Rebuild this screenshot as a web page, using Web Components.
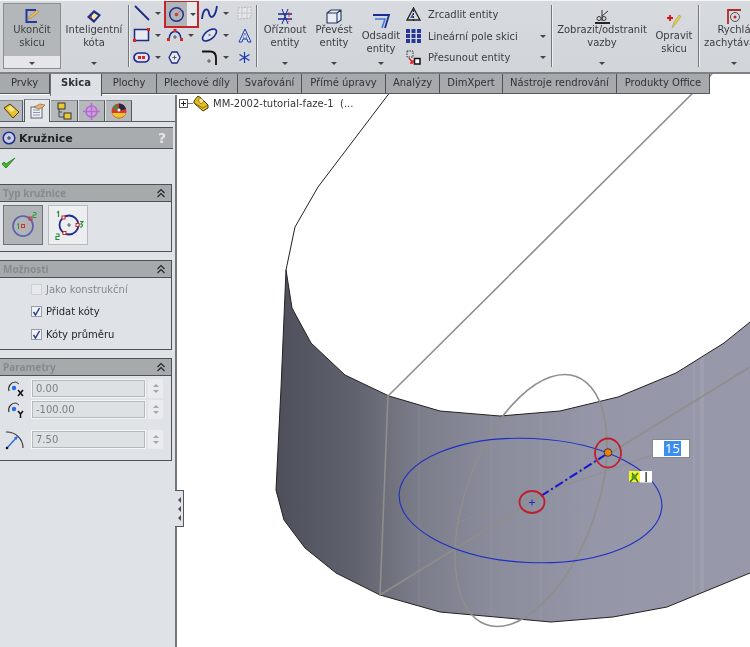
<!DOCTYPE html>
<html>
<head>
<meta charset="utf-8">
<title>Kružnice</title>
<style>
  html, body { margin: 0; height: 100%; overflow: hidden; }
  body { font-family: "DejaVu Sans", "Noto Sans", sans-serif; font-size: 10px; color: #333; }
</style>
</head>
<body>
<sw-app>
  <sw-toolbar slot="toolbar">
    <sw-big pressed w="58" style="margin-left:3px">
      <svg slot="icon" width="16" height="16" viewBox="0 0 16 16"><path d="M12 2H2.500V14H13" fill="none" stroke="#27389a" stroke-width="2"/><path d="M5 9 13 2l2 2-8 6-3 1z" fill="#e8c23a" stroke="#a77" stroke-width=".6"/></svg>
      Ukončit<br>skicu
    </sw-big>
    <sw-big w="62" style="margin-left:2px">
      <svg slot="icon" width="16" height="15" viewBox="0 0 16 15"><path d="M8 1 15 6 8 14 1 8z" fill="#1f2f86"/><path d="M8 4 12 6.500 8 11 4.500 8z" fill="#f2e9b0"/><circle cx="5" cy="8" r="1" fill="#d33"/></svg>
      Inteligentní<br>kóta
    </sw-big>
    <sw-sep style="margin-left:3px"></sw-sep>
    <sw-tools>
      <sw-tool arrow><svg width="16" height="16" viewBox="0 0 16 16"><path d="M1 1 15 15" stroke="#1a2a80" stroke-width="1.800"/></svg></sw-tool>
      <sw-tool arrow selected><svg width="17" height="17" viewBox="0 0 17 17"><circle cx="8.500" cy="8.500" r="6.800" fill="none" stroke="#1f2f90" stroke-width="1.500"/><circle cx="8.500" cy="8.500" r="1.700" fill="#c33"/><path d="M8.500 8.500 14 3" stroke="#c66"/></svg></sw-tool>
      <sw-tool arrow><svg width="17" height="16" viewBox="0 0 17 16"><path d="M1 14C2 3 7 2 8 8s6 6 8-7" fill="none" stroke="#1a2a90" stroke-width="1.800"/></svg></sw-tool>
      <sw-tool><svg width="15" height="14" viewBox="0 0 15 14"><path d="M1 2 14 1V12L1 13z" fill="#e4e6e8" stroke="#b4b8bc" stroke-dasharray="2 1"/><path d="M5 2V13M10 1V12M1 7H14" stroke="#c4c8cc"/></svg></sw-tool>

      <sw-tool arrow><svg width="17" height="14" viewBox="0 0 17 14"><path d="M1.500 1.500H15.500V12.500H1.500z" fill="#e8eaee" stroke="#1a2a80" stroke-width="1.500"/><path d="M0 11h3v3H0zM14 0h3v3h-3z" fill="#d22"/></svg></sw-tool>
      <sw-tool arrow><svg width="16" height="12" viewBox="0 0 16 12"><path d="M2 10C3 0 13 0 14 10" fill="none" stroke="#1a2a90" stroke-width="1.600"/><path d="M8 6v4M6 8h4" stroke="#555"/><path d="M0 9h3v3H0zM13 9h3v3h-3zM6.500 0h3v3h-3z" fill="#d22"/></svg></sw-tool>
      <sw-tool arrow><svg width="17" height="14" viewBox="0 0 17 14"><ellipse cx="8.500" cy="7" rx="8.200" ry="4.200" transform="rotate(-38 8.500 7)" fill="#dfe3ea" stroke="#1a2a90" stroke-width="1.600"/><circle cx="8.500" cy="7" r="1.200" fill="#889"/></svg></sw-tool>
      <sw-tool><svg width="14" height="15" viewBox="0 0 14 15"><path d="M7 1 13 14H10L9 11H5L4 14H1z" fill="#dfe6f6" stroke="#1c3aa0"/><path d="M7 5 9 10H5z" fill="#fff" stroke="#1c3aa0" stroke-width=".6"/></svg></sw-tool>

      <sw-tool arrow><svg width="17" height="11" viewBox="0 0 17 11"><rect x="1" y="1" width="15" height="9" rx="4.500" fill="#dfe3ea" stroke="#1a2a90" stroke-width="1.700"/><path d="M5 4h3v3H5zM9 4h3v3H9z" fill="#d22"/></svg></sw-tool>
      <sw-tool><svg width="13" height="13" viewBox="0 0 13 13"><path d="M4 1H9L12 6.500 9 12H4L1 6.500z" fill="#e8eaee" stroke="#1a2a90" stroke-width="1.300"/><path d="M6.500 4.500v4M4.500 6.500h4" stroke="#555"/></svg></sw-tool>
      <sw-tool arrow><svg width="17" height="15" viewBox="0 0 17 15"><path d="M1 1.500H9C13 1.500 15 4 15 8V15" fill="none" stroke="#111" stroke-width="1.800"/><path d="M8 9v4M6 11h4" stroke="#555"/></svg></sw-tool>
      <sw-tool><svg width="13" height="13" viewBox="0 0 13 13"><path d="M6.500 1v11M1.500 3.500l10 6M11.500 3.500l-10 6" stroke="#1c3ab0" stroke-width="1.200"/></svg></sw-tool>
    </sw-tools>
    <sw-sep style="margin-left:3px"></sw-sep>
    <sw-big w="46" style="margin-left:4px">
      <svg slot="icon" width="16" height="15" viewBox="0 0 16 15"><path d="M1 5H15M1 10H15" stroke="#1a2a90" stroke-width="1.500"/><path d="M5 0 11 15M11 0 5 15" stroke="#1a2a90"/><path d="M12 3V13" stroke="#d33" stroke-dasharray="2 1"/></svg>
      Oříznout<br>entity
    </sw-big>
    <sw-big w="42" style="margin-left:5px">
      <svg slot="icon" width="16" height="15" viewBox="0 0 16 15"><path d="M1 4 5 1H15V11L11 14H1z M1 4H11V14M11 4 15 1" fill="#e9edf3" stroke="#25355f" stroke-width="1.100"/></svg>
      Převést<br>entity
    </sw-big>
    <sw-big w="44" low style="margin-left:4px">
      <svg slot="icon" width="19" height="17" viewBox="0 0 19 17"><path d="M1 2H17L13 15" fill="none" stroke="#1a2a90" stroke-width="1.800"/><path d="M3 6H13L10 15" fill="none" stroke="#3a7ad8" stroke-width="1.600"/></svg>
      Odsadit<br>entity
    </sw-big>
    <sw-list>
      <sw-row><svg slot="icon" width="15" height="15" viewBox="0 0 15 15"><path d="M7.500 1 14 13H1z" fill="none" stroke="#222" stroke-width="1.300"/><path d="M7.500 0V15" stroke="#223" stroke-dasharray="2 1"/><path d="M4 11h3V6z" fill="#3d5fb0"/></svg>Zrcadlit entity</sw-row>
      <sw-row arrow><svg slot="icon" width="15" height="14" viewBox="0 0 15 14" fill="#27389a"><rect x="0" y="0" width="4" height="4"/><rect x="5.500" y="0" width="4" height="4"/><rect x="11" y="0" width="4" height="4"/><rect x="0" y="5" width="4" height="4"/><rect x="5.500" y="5" width="4" height="4"/><rect x="11" y="5" width="4" height="4"/><rect x="0" y="10" width="4" height="4"/><rect x="5.500" y="10" width="4" height="4"/><rect x="11" y="10" width="4" height="4"/></svg>Lineární pole skici</sw-row>
      <sw-row arrow><svg slot="icon" width="15" height="15" viewBox="0 0 15 15"><path d="M1 1H7V7H1z" fill="none" stroke="#333" stroke-dasharray="1.500 1"/><path d="M8.500 8.500H14V14H8.500z" fill="#fff" stroke="#111" stroke-width="1.500"/><path d="M3 8 7 13M7 13V10M7 13H4" stroke="#d22" stroke-width="1.400" fill="none"/></svg>Přesunout entity</sw-row>
    </sw-list>
    <sw-sep style="margin-left:1px"></sw-sep>
    <sw-big w="92" style="margin-left:3px">
      <svg slot="icon" width="17" height="15" viewBox="0 0 17 15"><path d="M1 14H16" stroke="#111" stroke-width="1.800"/><circle cx="5" cy="9.500" r="2" fill="none" stroke="#333"/><circle cx="10" cy="9.500" r="2" fill="none" stroke="#333"/><path d="M8 1V12M8 7 14 2" stroke="#333"/></svg>
      Zobrazit/odstranit<br>vazby
    </sw-big>
    <sw-big w="44" low noarrow style="margin-left:4px">
      <svg slot="icon" width="16" height="16" viewBox="0 0 16 16"><path d="M1 4H7M4 1V7" stroke="#d11" stroke-width="1.800"/><path d="M6 14 8 8l5-7 2 1.500-5 7z" fill="#eacb3a" stroke="#997" stroke-width=".6"/></svg>
      Opravit<br>skicu
    </sw-big>
    <sw-sep style="margin-left:2px"></sw-sep>
    <sw-big w="60" style="margin-left:4px">
      <svg slot="icon" width="16" height="15" viewBox="0 0 16 15"><path d="M15 1H2V15" fill="none" stroke="#b5282c" stroke-width="1.800"/><circle cx="9" cy="8" r="4.500" fill="none" stroke="#555"/><circle cx="9" cy="8" r="1.500" fill="#c22"/></svg>
      Rychlá<br>zachytávání
    </sw-big>
  </sw-toolbar>

  <sw-tabs slot="tabs">
    <sw-tab style="width:50px">Prvky</sw-tab>
    <sw-tab active style="width:52px">Skica</sw-tab>
    <sw-tab style="width:55px">Plochy</sw-tab>
    <sw-tab style="width:81px">Plechové díly</sw-tab>
    <sw-tab style="width:64px">Svařování</sw-tab>
    <sw-tab style="width:84px">Přímé úpravy</sw-tab>
    <sw-tab style="width:54px">Analýzy</sw-tab>
    <sw-tab style="width:63px">DimXpert</sw-tab>
    <sw-tab style="width:114px">Nástroje rendrování</sw-tab>
    <sw-tab style="width:93px">Produkty Office</sw-tab>
  </sw-tabs>

  <sw-panel slot="panel">
    <sw-paneltabs>
      <sw-ptab style="width:23px"><svg width="17" height="16" viewBox="0 0 17 16"><path d="M1 5 7 1 16 9 10 15z" fill="#e9c22e" stroke="#4d3d05"/><path d="M4 5 8 3l4 4-4 2z" fill="#f7e68a"/></svg></sw-ptab>
      <sw-ptab active style="width:26px"><svg width="17" height="16" viewBox="0 0 17 16"><rect x="2" y="4" width="11" height="11" fill="#eef0f4" stroke="#666"/><path d="M4 7h7M4 9.500h7M4 12h7" stroke="#8a9ab8"/><path d="M5 4 11 1l5 1-3 3-4 1z" fill="#e3b27a" stroke="#8a5a2a" stroke-width=".6"/></svg></sw-ptab>
      <sw-ptab style="width:27px"><svg width="17" height="18" viewBox="0 0 17 18"><path d="M3 5V15H8M3 10H6" fill="none" stroke="#444"/><rect x="2" y="1" width="7" height="6" fill="#e9c92e" stroke="#333"/><rect x="8" y="11" width="7" height="6" fill="#e9c92e" stroke="#333"/></svg></sw-ptab>
      <sw-ptab style="width:26px"><svg width="17" height="17" viewBox="0 0 17 17"><circle cx="8.500" cy="8.500" r="5.500" fill="#cfa0dc" stroke="#b36cd0" stroke-width="1.500"/><path d="M8.500 0V17M0 8.500H17" stroke="#b36cd0" stroke-width="1.500"/></svg></sw-ptab>
      <sw-ptab style="width:26px"><svg width="16" height="16" viewBox="0 0 16 16"><circle cx="8" cy="8" r="7.500" fill="#d33"/><path d="M1 10A7.500 7.500 0 0 0 15 10z" fill="#e6c925"/><path d="M1.500 5 8 8 5 1.500A7.500 7.500 0 0 0 1.500 5z" fill="#2c9a3c"/><path d="M8 .5A7.500 7.500 0 0 1 15 6L8 8z" fill="#262a40"/><circle cx="8" cy="7" r="1.500" fill="#fff"/></svg></sw-ptab>
    </sw-paneltabs>
    <sw-title>
      <svg slot="icon" width="14" height="14" viewBox="0 0 14 14"><circle cx="7" cy="7" r="5.800" fill="#c8cce6" stroke="#1f2f90" stroke-width="1.500"/><path d="M7 5v4M5 7h4" stroke="#334"/></svg>
      Kružnice
    </sw-title>
    <sw-ok></sw-ok>
    <sw-section label="Typ kružnice" body="50">
      <sw-choice pressed>
        <svg width="30" height="30" viewBox="0 0 30 30"><circle cx="15" cy="16" r="10" fill="none" stroke="#5a5fb0" stroke-width="1.600"/><rect x="13.500" y="14.500" width="3" height="3" fill="none" stroke="#c33"/><rect x="21" y="7" width="3" height="3" fill="none" stroke="#c33"/><path d="M9 14.500 10.500 13.500V19" fill="none" stroke="#2a9a4a"/><path d="M25 2.500H28V5H25V7.500H28.500" fill="none" stroke="#2a9a4a"/></svg>
      </sw-choice>
      <sw-choice>
        <svg width="32" height="32" viewBox="0 0 32 32"><circle cx="17" cy="16" r="9.500" fill="none" stroke="#1a2a90" stroke-width="1.800"/><path d="M17 14v4M15 16h4" stroke="#667" stroke-width="1.200"/><rect x="10" y="7" width="3" height="3" fill="#fff" stroke="#c22"/><rect x="24" y="14.500" width="3" height="3" fill="#fff" stroke="#c22"/><rect x="11" y="22.500" width="3" height="3" fill="#fff" stroke="#c22"/><path d="M5 3.500 6.500 2.500V8" fill="none" stroke="#2a8a3a" stroke-width="1.200"/><path d="M28 12.500H31L29 15C31 15 31 18.500 28 18" fill="none" stroke="#2a8a3a" stroke-width="1.200"/><path d="M4 25H7V27.500H4V30.500H7.500" fill="none" stroke="#2a8a3a" stroke-width="1.200"/></svg>
      </sw-choice>
    </sw-section>
    <sw-section label="Možnosti" body="72" stack style="margin-top:8px">
      <sw-check disabled>Jako konstrukční</sw-check>
      <sw-check checked>Přidat kóty</sw-check>
      <sw-check checked>Kóty průměru</sw-check>
    </sw-section>
    <sw-section label="Parametry" body="85" params style="margin-top:8px">
      <sw-num>
        <svg slot="icon" width="20" height="19" viewBox="0 0 20 19"><path d="M11 3A7 7 0 0 0 4 12" fill="none" stroke="#333" stroke-width="1.200"/><path d="M11 3 14 5" stroke="#333"/><circle cx="9" cy="9" r="2.200" fill="#2a6ae0"/><path d="M13 11 18 17M18 11 13 17" stroke="#111" stroke-width="1.500"/></svg>
      </sw-num>
      <sw-num style="margin-top:2px" value="-100.00">
        <svg slot="icon" width="20" height="19" viewBox="0 0 20 19"><path d="M11 3A7 7 0 0 0 4 12" fill="none" stroke="#333" stroke-width="1.200"/><path d="M11 3 14 5" stroke="#333"/><circle cx="9" cy="9" r="2.200" fill="#2a6ae0"/><path d="M13 11 15.500 14 18 11M15.500 14V18" fill="none" stroke="#111" stroke-width="1.500"/></svg>
      </sw-num>
      <sw-num style="margin-top:11px" value="7.50">
        <svg slot="icon" width="20" height="21" viewBox="0 0 20 21"><path d="M1 3A16 16 0 0 1 18 19" fill="none" stroke="#333" stroke-width="1.100"/><path d="M2 19 12 8" stroke="#2a6ae0" stroke-width="1.400"/><path d="M13 7 9 8.500 11.500 11z" fill="#2a6ae0"/><circle cx="2" cy="19" r="1.300" fill="#111"/></svg>
      </sw-num>
    </sw-section>
  </sw-panel>

  <sw-canvas slot="canvas">
    <svg slot="art" width="573" height="573" viewBox="177 74 573 573">
      <defs>
        <linearGradient id="wall" gradientUnits="userSpaceOnUse" x1="276" y1="0" x2="750" y2="0">
          <stop offset="0" stop-color="#4d4f5a"/>
          <stop offset=".16" stop-color="#5f616c"/>
          <stop offset=".3" stop-color="#7b7d8a"/>
          <stop offset=".47" stop-color="#8b8d9d"/>
          <stop offset=".68" stop-color="#9596a7"/>
          <stop offset="1" stop-color="#9798a9"/>
        </linearGradient>
        <clipPath id="wallclip"><path d="M286 270 292 308 311 343 345 375 389 396 440 411 500 416 560 411 618 397 676 373 724 343 750 322V573L667 607 613 617 551 622 440 612 380 595 336 573 305 548 284 520 276 490 281 388Z"/></clipPath>
      </defs>
      <path d="M286 270 292 308 311 343 345 375 389 396 440 411 500 416 560 411 618 397 676 373 724 343 750 322V573L667 607 613 617 551 622 440 612 380 595 336 573 305 548 284 520 276 490 281 388Z" fill="url(#wall)"/>
      <g clip-path="url(#wallclip)" fill="#fff">
        <rect x="418" y="380" width="2" height="250" opacity=".03"/>
        <rect x="490" y="380" width="3" height="250" opacity=".03"/>
        <rect x="540" y="380" width="2" height="250" opacity=".03"/>
        <rect x="693" y="320" width="2" height="300" opacity=".06"/>
        <rect x="700" y="320" width="4" height="300" opacity=".08"/>
      </g>
      <g fill="none" stroke="#222" stroke-width="1">
        <path d="M400 79 318 187 295 227 286 270 292 308 311 343 345 375 389 396 440 411 500 416 560 411 618 397 676 373 724 343 750 322"/>
        <path d="M286 270 281 388 276 490 284 520 305 548 336 573 380 595 440 612 551 622 613 617 667 607 750 573"/>
      </g>
      <g fill="none" stroke="#8e8e8b" stroke-width="1.600">
        <path d="M712 74 388 396 380 595 750 367"/>
        <ellipse cx="531" cy="500.500" rx="132" ry="65" transform="rotate(-70 531 500.500)"/>
      </g>
      <path d="M456 523 653 455" stroke="#8e8e8b" fill="none" opacity=".8"/>
      <ellipse cx="530.500" cy="500.500" rx="131.500" ry="62" transform="rotate(2.700 530.500 500.500)" fill="none" stroke="#1d2fc4" stroke-width="1.100"/>
      <path d="M541 496 605 455" stroke="#1414d8" stroke-width="2" stroke-dasharray="9 3 2 3" fill="none"/>
      <path d="M529 502.500h6M532 499.500v6" stroke="#1d2fc4"/>
      <ellipse cx="532" cy="502" rx="12.500" ry="11" fill="none" stroke="#c01e2a" stroke-width="1.800"/>
      <ellipse cx="608" cy="453" rx="13" ry="14.500" fill="none" stroke="#c01e2a" stroke-width="1.800"/>
      <circle cx="608" cy="452.500" r="3.800" fill="#f08010" stroke="#222" stroke-width=".8"/>
      <rect x="629" y="471" width="11" height="11" fill="#f4f422"/>
      <path d="M630 482 638 473M632 473 638 482" stroke="#2d6a1a" stroke-width="1.400"/>
      <circle cx="634" cy="477" r="2.500" fill="#4e9a2a"/>
      <rect x="640" y="471" width="12" height="11.500" fill="#fff"/>
      <rect x="645.500" y="472" width="1.200" height="10" fill="#111"/>
    </svg>
    <sw-tree slot="over">
      <svg slot="icon" width="16" height="17" viewBox="0 0 16 17"><path d="M1 6 5 1 8 3 11 6 15 10V13L10 16 1 8z" fill="#e3bd22" stroke="#3f3205"/><path d="M5 5 8 3l3 3-3 3z" fill="#f6e88e" stroke="#6a5510" stroke-width=".6"/><path d="M1 8 10 13 15 10" fill="none" stroke="#6a5510" stroke-width=".7"/></svg>
      MM-2002-tutorial-faze-1&nbsp; (...
    </sw-tree>
    <sw-dim slot="over">15</sw-dim>
  </sw-canvas>
  <sw-handle slot="over"></sw-handle>
</sw-app>

<script>
// small helper, every element gets its own open shadow root
function define(name, css, html) {
  customElements.define(name, class extends HTMLElement {
    constructor() {
      super();
      this.attachShadow({mode: 'open'}).innerHTML = '<style>' + css + '</style>' + html;
    }
  });
}

const ARROW = 'width:0;height:0;border:3px solid transparent;border-top:3px solid #444;border-bottom:0;';

define('sw-app', `
  :host { display: grid; grid-template-columns: 177px 573px; grid-template-rows: 74px 21px 552px; width: 750px; height: 647px; position: relative; overflow: hidden; }
  ::slotted([slot=toolbar]) { grid-column: 1 / 3; grid-row: 1; }
  ::slotted([slot=tabs]) { grid-column: 1 / 3; grid-row: 2; justify-self: start; z-index: 2; }
  ::slotted([slot=panel]) { grid-column: 1; grid-row: 3; }
  ::slotted([slot=canvas]) { grid-column: 2; grid-row: 2 / 4; }
  ::slotted([slot=over]) { position: absolute; left: 175px; top: 490px; z-index: 3; }
`, `<slot name="toolbar"></slot><slot name="tabs"></slot><slot name="panel"></slot><slot name="canvas"></slot><slot name="over"></slot>`);

define('sw-toolbar', `
  :host { display: flex; align-items: flex-start; box-sizing: border-box; height: 74px; background: linear-gradient(#d7dbe0, #d1d5da); border-top: 1px solid #f4f5f6; border-bottom: 2px solid #7d8084; overflow: hidden; filter: blur(.3px); color: #3a3d42; }
`, `<slot></slot>`);

class SwBig extends HTMLElement {
  constructor() {
    super();
    this.attachShadow({mode: 'open'}).innerHTML = `
      <style>
        :host { display: flex; flex: none; flex-direction: column; align-items: center; box-sizing: border-box; height: 66px; margin-top: 2px; white-space: nowrap; }
        :host([pressed]) { outline: 1px solid #8a8d90; outline-offset: -1px; }
        .main { flex: none; height: 53px; width: 100%; text-align: center; line-height: 12.500px; }
        :host([pressed]) .main { background: #b4b7ba; }
        .ico { display: flex; align-items: flex-end; justify-content: center; height: 19px; padding-top: 2px; }
        :host([low]) .ico { height: 25px; }
        .drop { flex: 1; width: 100%; display: flex; align-items: center; justify-content: center; }
        :host([pressed]) .drop { background: #e4e6e9; }
        :host([noarrow]) .drop i { display: none; }
        i { ${ARROW} margin-top: 2px; }
      </style>
      <div class="main"><div class="ico"><slot name="icon"></slot></div><slot></slot></div>
      <div class="drop"><i></i></div>`;
  }
  connectedCallback() {
    this.style.width = this.getAttribute('w') + 'px';
  }
}
customElements.define('sw-big', SwBig);

define('sw-sep', `
  :host { display: block; flex: none; width: 2px; height: 62px; margin-top: 4px; background: linear-gradient(90deg, #73777b 50%, #eef0f2 50%); }
`, ``);

define('sw-tools', `
  :host { display: grid; flex: none; grid-template-columns: 33px 35px 35px 18px; grid-auto-rows: 22px; margin-left: 2px; margin-top: 1px; width: 121px; }
`, `<slot></slot>`);

define('sw-tool', `
  :host { display: flex; align-items: center; box-sizing: border-box; position: relative; padding-left: 1px; }
  .ico { display: flex; align-items: center; justify-content: center; width: 17px; height: 100%; }
  i { ${ARROW} margin-left: 5px; display: none; }
  :host([arrow]) i { display: block; }
  :host([selected]) { outline: 2px solid #c3242a; outline-offset: -1px; height: 26px; margin-top: -1px; width: 33px; padding-left: 0; background: linear-gradient(90deg, #b2b5b8 68%, #e6e8ea 68%); }
  :host([selected]) .ico { width: 22px; }
  :host([selected]) i { margin-left: 3px; }
`, `<div class="ico"><slot></slot></div><i></i>`);

define('sw-list', `
  :host { display: flex; flex: none; flex-direction: column; width: 144px; margin-left: 3px; margin-top: 3px; }
`, `<slot></slot>`);

define('sw-row', `
  :host { display: flex; align-items: center; height: 21.500px; gap: 7px; white-space: nowrap; }
  i { ${ARROW} margin-left: auto; margin-right: 4px; display: none; }
  :host([arrow]) i { display: block; }
`, `<slot name="icon"></slot><span><slot></slot></span><i></i>`);

define('sw-tabs', `
  :host { display: flex; align-items: flex-start; width: 710px; height: 19px; background: #a7aaad; border-bottom: 1px solid #55585c; filter: blur(.25px); }
`, `<slot></slot>`);

define('sw-tab', `
  :host { display: block; flex: none; box-sizing: border-box; height: 19px; line-height: 17.500px; text-align: center; border-right: 1px solid #4e5155; color: #2f3236; white-space: nowrap; }
  :host([active]) { height: 22px; background: #dde0e4; font-weight: 700; border-left: 1px solid #6a6d70; line-height: 18px; position: relative; z-index: 1; }
`, `<slot></slot>`);

define('sw-panel', `
  :host { display: flex; flex-direction: column; box-sizing: border-box; background: #dfe3e7; border-right: 2px solid #74777b; filter: blur(.25px); width: 177px; height: 552px; padding-right: 2px; overflow: hidden; }
`, `<slot></slot>`);

define('sw-paneltabs', `
  :host { display: flex; flex: none; height: 27px; align-items: flex-end; box-sizing: border-box; border-bottom: 1px solid #5a5d61; padding-left: 0; gap: 1px; margin-right: -2px; }
`, `<slot></slot>`);

define('sw-ptab', `
  :host { display: flex; flex: none; align-items: center; justify-content: center; box-sizing: border-box; height: 21px; background: #b6b9bc; border-right: 1px solid #55585c; border-top: 1px solid #8a8d90; }
  :host([active]) { height: 23px; background: #e3e6ea; margin-bottom: -1px; border-left: 1px solid #55585c; }
`, `<slot></slot>`);

define('sw-title', `
  :host { display: flex; flex: none; align-items: center; gap: 3px; box-sizing: border-box; height: 22px; margin-top: 5px; padding-left: 2px; width: 173px; background: #a9acaf; border-top: 1px solid #4d5054; border-bottom: 1px solid #4d5054; font-weight: 700; font-size: 11px; color: #20232a; white-space: nowrap; }
  b { margin-left: auto; margin-right: 7px; color: #e4e5e6; font-size: 14px; }
`, `<slot name="icon"></slot><span><slot></slot></span><b>?</b>`);

define('sw-ok', `
  :host { display: block; flex: none; height: 35px; box-sizing: border-box; padding: 7px 0 0 1px; }
`, `<svg width="15" height="14" viewBox="0 0 15 14"><path d="M1 8 5 12 14 2 5 8 3 6z" fill="#4eb03a" stroke="#2f8a26" stroke-linejoin="round"/></svg>`);

class SwSection extends HTMLElement {
  constructor() {
    super();
    this.attachShadow({mode: 'open'}).innerHTML = `
      <style>
        :host { display: block; flex: none; width: 172px; box-sizing: border-box; border-right: 1px solid #4d5054; border-bottom: 1px solid #4d5054; }
        .head { display: flex; align-items: center; justify-content: space-between; box-sizing: border-box; height: 18px; padding: 0 5px 0 3px; background: #a7aaad; border-top: 1px solid #4d5054; border-bottom: 1px solid #4d5054; color: #868a8e; font-family: "Noto Sans", sans-serif; font-weight: 700; font-size: 10px; white-space: nowrap; }
        .body { display: flex; align-items: flex-start; gap: 5px; box-sizing: border-box; padding: 3px 0 0 3px; }
        :host([stack]) .body { flex-direction: column; gap: 0; padding: 0 0 0 31px; }
        :host([params]) .body { flex-direction: column; gap: 0; padding: 3px 0 0 5px; }
        svg { display: block; }
      </style>
      <div class="head"><span id="t"></span><svg width="10" height="10" viewBox="0 0 10 10"><path d="M1.500 5 5 1.500 8.500 5M1.500 9 5 5.500 8.500 9" fill="none" stroke="#222" stroke-width="1.100"/></svg></div>
      <div class="body" id="b"><slot></slot></div>`;
  }
  connectedCallback() {
    this.shadowRoot.querySelector('#t').textContent = this.getAttribute('label');
    this.shadowRoot.querySelector('#b').style.height = (this.getAttribute('body') - 1) + 'px';
  }
}
customElements.define('sw-section', SwSection);

define('sw-choice', `
  :host { display: flex; align-items: center; justify-content: center; box-sizing: border-box; width: 40px; height: 40px; background: #eceef0; border: 1px solid #b8bbbe; }
  :host([pressed]) { background: #b1b4b7; border-color: #6f7276; }
`, `<slot></slot>`);

define('sw-check', `
  :host { display: flex; align-items: center; gap: 4px; height: 22.500px; white-space: nowrap; color: #24272c; }
  :host([disabled]) { color: #85898d; }
  .box { display: flex; align-items: center; justify-content: center; box-sizing: border-box; width: 11px; height: 11px; background: #f1f2f4; border: 1px solid #9a9da1; }
  :host([disabled]) .box { background: #e7e9ec; border-color: #ccd0d4; }
  svg { display: none; }
  :host([checked]) svg { display: block; }
`, `<div class="box"><svg width="9" height="9" viewBox="0 0 9 9"><path d="M1.500 5 3.500 8 7.500 1" fill="none" stroke="#27409a" stroke-width="1.500"/></svg></div><span><slot></slot></span>`);

class SwNum extends HTMLElement {
  constructor() {
    super();
    this.attachShadow({mode: 'open'}).innerHTML = `
      <style>
        :host { display: flex; align-items: center; height: 19px; flex: none; }
        .ico { flex: none; width: 26px; display: flex; align-items: center; }
        .val { flex: none; box-sizing: border-box; width: 115px; height: 19px; line-height: 17px; padding-left: 4px; background: #dee1e4; border: 1px solid #f4f5f6; outline: 1px solid #b5b8bb; outline-offset: -2px; color: #7b7f83; }
        .spin { flex: none; display: flex; flex-direction: column; align-items: center; justify-content: space-around; box-sizing: border-box; width: 15px; height: 19px; margin-left: 2px; background: #e9ebee; padding: 3px 0; }
        .spin i { width: 0; height: 0; border: 3px solid transparent; border-bottom: 3px solid #a3a6aa; border-top: 0; }
        .spin i + i { border-bottom: 0; border-top: 3px solid #a3a6aa; }
      </style>
      <div class="ico"><slot name="icon"></slot></div><div class="val" id="v"></div><div class="spin"><i></i><i></i></div>`;
  }
  connectedCallback() {
    this.shadowRoot.querySelector('#v').textContent = this.getAttribute('value') || '0.00';
  }
}
customElements.define('sw-num', SwNum);

define('sw-canvas', `
  :host { display: block; position: relative; background: #fff; overflow: hidden; }
  ::slotted(svg) { display: block; }
`, `<slot name="art"></slot><slot name="over"></slot>`);

define('sw-tree', `
  :host { position: absolute; left: 2px; top: 21px; display: flex; align-items: center; white-space: nowrap; color: #33363a; filter: blur(.2px); }
  .plus { flex: none; box-sizing: border-box; width: 9px; height: 9px; border: 1px solid #555; position: relative; }
  .plus::before { content: ""; position: absolute; left: 1px; top: 3px; width: 5px; height: 1px; background: #222; }
  .plus::after { content: ""; position: absolute; left: 3px; top: 1px; width: 1px; height: 5px; background: #222; }
  .dash { flex: none; width: 5px; height: 1px; background: #777; }
  span { margin-left: 4px; }
`, `<div class="plus"></div><div class="dash"></div><slot name="icon"></slot><span><slot></slot></span>`);

define('sw-dim', `
  :host { position: absolute; left: 475px; top: 365px; display: flex; align-items: center; box-sizing: border-box; width: 38px; height: 19px; padding-left: 11px; background: #fff; border: 1px solid #85888c; font-family: "Noto Sans", sans-serif; font-size: 13px; color: #fff; filter: blur(.25px); }
  span { background: #3a8ff0; padding: 0 1px; line-height: 15px; }
`, `<span><slot></slot></span>`);

define('sw-handle', `
  :host { display: flex; flex-direction: column; align-items: center; justify-content: center; gap: 3px; box-sizing: border-box; width: 9px; height: 37px; background: #dfe3e7; border: 1px solid #55585c; border-left: 0; }
  i { width: 0; height: 0; border: 3px solid transparent; border-right: 3px solid #4a4d51; border-left: 0; }
`, `<i></i><i></i><i></i>`);
</script>
</body>
</html>
